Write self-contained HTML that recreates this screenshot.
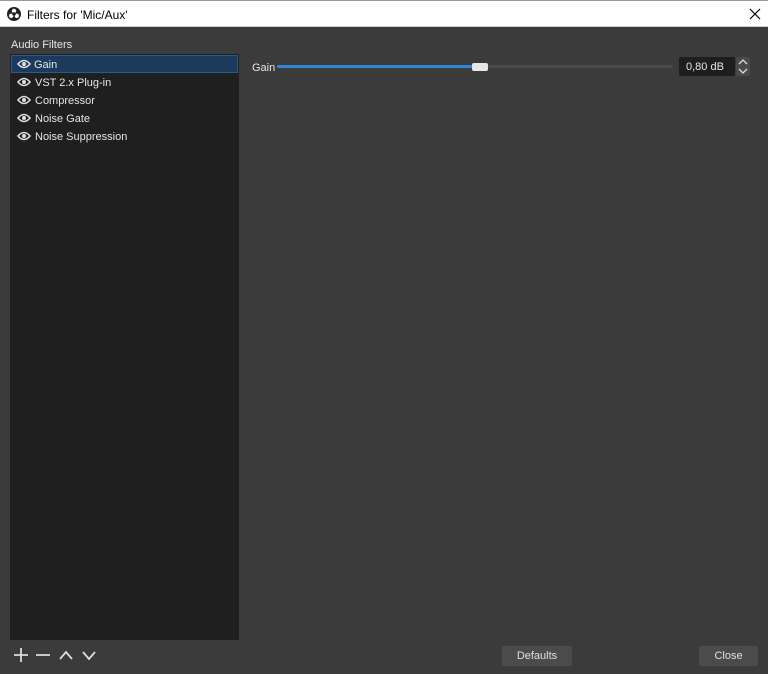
<!DOCTYPE html><html><head><style>
body{margin:0;width:768px;height:674px;background:#3b3b3b;font-family:"Liberation Sans",sans-serif;font-size:11px;color:#e6e6e6;position:relative;overflow:hidden}
.a{position:absolute}
.title{left:0;top:0;width:768px;height:27px;background:#fff;border-top:1px solid #999;box-sizing:border-box;border-bottom:1px solid #cfcfcf}
.row{position:absolute;left:2px;width:226px;height:18px;line-height:18px}
.row span{position:absolute;left:23px;top:1px}
.eye{position:absolute;left:5px;top:4px}
.btn{background:#4b4b4b;border-radius:2px;text-align:center;line-height:21px;height:20px;color:#e0e0e0}
</style></head><body>
<div class="a title">
<svg class="a" style="left:7px;top:6px" width="14" height="14" viewBox="0 0 14 14"><circle cx="7" cy="7" r="7" fill="#222"/><circle cx="7" cy="4" r="2.2" fill="#fff"/><circle cx="4.2" cy="8.8" r="2.2" fill="#fff"/><circle cx="9.8" cy="8.8" r="2.2" fill="#fff"/><circle cx="7" cy="7" r="1.8" fill="#222"/></svg>
<div class="a" style="left:27px;top:7px;color:#000;font-size:12px">Filters for 'Mic/Aux'</div>
<svg class="a" style="left:749px;top:7px" width="12" height="12" viewBox="0 0 12 12"><path d="M1 1L11 11M11 1L1 11" stroke="#000" stroke-width="1.2"/></svg>
</div>
<div class="a" style="left:11px;top:39px">Audio Filters</div>
<div class="a" style="left:10px;top:54px;width:229px;height:586px;background:#1f1f1f">
<div class="row" style="top:1px;background:#1b3a5c;border:1px solid #2a5a8c;box-sizing:border-box;width:227px;left:1px"><svg class="eye" style="left:5px;top:3px" width="14" height="10" viewBox="0 0 14 10"><path d="M1 5Q7 -2 13 5Q7 12 1 5Z" fill="none" stroke="#ddd" stroke-width="1.6"/><circle cx="7" cy="5" r="2" fill="#ddd"/></svg><span style="left:22px;top:0px">Gain</span></div>
<div class="row" style="top:19px"><svg class="eye" width="14" height="10" viewBox="0 0 14 10"><path d="M1 5Q7 -2 13 5Q7 12 1 5Z" fill="none" stroke="#ddd" stroke-width="1.6"/><circle cx="7" cy="5" r="2" fill="#ddd"/></svg><span>VST 2.x Plug-in</span></div>
<div class="row" style="top:37px"><svg class="eye" width="14" height="10" viewBox="0 0 14 10"><path d="M1 5Q7 -2 13 5Q7 12 1 5Z" fill="none" stroke="#ddd" stroke-width="1.6"/><circle cx="7" cy="5" r="2" fill="#ddd"/></svg><span>Compressor</span></div>
<div class="row" style="top:55px"><svg class="eye" width="14" height="10" viewBox="0 0 14 10"><path d="M1 5Q7 -2 13 5Q7 12 1 5Z" fill="none" stroke="#ddd" stroke-width="1.6"/><circle cx="7" cy="5" r="2" fill="#ddd"/></svg><span>Noise Gate</span></div>
<div class="row" style="top:73px"><svg class="eye" width="14" height="10" viewBox="0 0 14 10"><path d="M1 5Q7 -2 13 5Q7 12 1 5Z" fill="none" stroke="#ddd" stroke-width="1.6"/><circle cx="7" cy="5" r="2" fill="#ddd"/></svg><span>Noise Suppression</span></div>
</div>
<div class="a" style="left:252px;top:62px">Gain</div>
<div class="a" style="left:277px;top:65px;width:396px;height:3px;background:#4a4a4a;border-radius:2px"></div>
<div class="a" style="left:277px;top:65px;width:200px;height:3px;background:#2f86d8;border-radius:2px"></div>
<div class="a" style="left:472px;top:63px;width:16px;height:8px;background:#e8e8e8;border-radius:2px"></div>
<div class="a" style="left:679px;top:57px;width:56px;height:19px;background:#1e1e1e;border-radius:2px"><span class="a" style="left:7px;top:4px">0,80 dB</span></div>
<svg class="a" style="left:736px;top:57px" width="14" height="19" viewBox="0 0 14 19"><rect width="14" height="19" fill="#4a4a4a" rx="2"/><path d="M3 7L7 3L11 7M3 12L7 16L11 12" fill="none" stroke="#ddd" stroke-width="1.3"/></svg>
<svg class="a" style="left:12px;top:647px" width="90" height="16" viewBox="0 0 90 16"><path d="M2 8H16M9 1V15M24 8H38M48 12L54 5L60 12M71 5L77 12L83 5" fill="none" stroke="#ddd" stroke-width="1.8"/></svg>
<div class="a btn" style="left:502px;top:646px;width:70px">Defaults</div>
<div class="a btn" style="left:699px;top:646px;width:59px">Close</div>
</body></html>
